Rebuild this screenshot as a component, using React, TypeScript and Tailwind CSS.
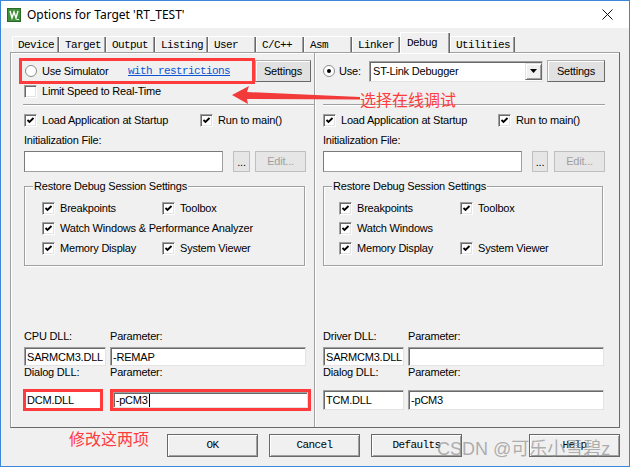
import React from "react";

const mono = "font-['Liberation_Mono','Courier_New',monospace] text-[11px] tracking-[-0.6px]";

const tabs = [
  { label: "Device", w: "w-[47px]" },
  { label: "Target", w: "w-[47px]" },
  { label: "Output", w: "w-[49px]" },
  { label: "Listing", w: "w-[53px]" },
  { label: "User", w: "w-[48px]" },
  { label: "C/C++", w: "w-[48px]" },
  { label: "Asm", w: "w-[48px]" },
  { label: "Linker", w: "w-[48px]" },
  { label: "Debug", w: "w-[50px]", active: true },
  { label: "Utilities", w: "w-[65px]" },
];

function Check({ checked = true }: { checked?: boolean }) {
  return (
    <span className="flex h-[13px] w-[13px] shrink-0 items-center justify-center border border-t-[#a0a0a0] border-l-[#a0a0a0] border-b-white border-r-white bg-white shadow-[inset_1px_1px_0_#696969,inset_-1px_-1px_0_#e3e3e3]">
      {checked && (
        <svg width="9" height="9" viewBox="0 0 9 9">
          <polyline points="1.5,4 3.5,6 7.5,2" fill="none" stroke="#000" strokeWidth="1.8" />
        </svg>
      )}
    </span>
  );
}

function CheckRow({ label, checked = true, className = "" }: { label: string; checked?: boolean; className?: string }) {
  return (
    <div className={`flex h-[14px] items-center gap-[5px] ${className}`}>
      <Check checked={checked} />
      <span className="whitespace-nowrap leading-[14px]">{label}</span>
    </div>
  );
}

function Radio({ on = false }: { on?: boolean }) {
  return (
    <svg width="12" height="12" viewBox="0 0 12 12" className="shrink-0">
      <circle cx="6" cy="6" r="5.5" fill="#fff" stroke="#8c8c8c" />
      {on && <circle cx="6" cy="6" r="2" fill="#000" />}
    </svg>
  );
}

function SunkenBox({ text, className = "", cursor = false }: { text: string; className?: string; cursor?: boolean }) {
  return (
    <div
      className={`flex items-center bg-white pl-[2px] border border-t-[#a0a0a0] border-l-[#a0a0a0] border-r-[#e3e3e3] border-b-[#e3e3e3] shadow-[inset_1px_1px_0_#696969] ${className}`}
    >
      <span className="whitespace-nowrap leading-[14px]">{text}</span>
      {cursor && <span className="ml-px h-[13px] w-px bg-black" />}
    </div>
  );
}

function SettingsBtn({ className = "" }: { className?: string }) {
  return (
    <div
      className={`flex h-[22px] items-center justify-center bg-[#e1e1e1] border border-[#adadad] border-r-[#696969] border-b-[#696969] shadow-[inset_1px_1px_0_#fff] ${className}`}
    >
      Settings
    </div>
  );
}

function InitRow({ left }: { left?: boolean }) {
  return (
    <>
      <div className="mt-[7px] h-[12px] leading-[12px]">Initialization File:</div>
      <div className="mt-[5px] flex h-[21px]">
        <div className="w-[199px] bg-white border border-[#a0a0a0] border-t-[#7a7a7a] border-l-[#7a7a7a]" />
        <div className={`ml-[10px] flex items-end justify-center pb-[4px] bg-[#e6e6e6] border border-[#bfbfbf] leading-[10px] ${left ? "w-[17px]" : "w-[16px]"}`}>
          ...
        </div>
        <div className={`flex items-center justify-center bg-[#e6e6e6] border border-[#bfbfbf] text-[#a0a0a0] ${left ? "ml-[5px] w-[51px]" : "ml-[6px] w-[51px]"}`}>
          Edit...
        </div>
      </div>
    </>
  );
}

function RestoreGroup({ full }: { full?: boolean }) {
  return (
    <div
      className={`relative mt-[14px] h-[80px] border border-[#a0a0a0] shadow-[inset_1px_1px_0_#fff,1px_1px_0_#fff] ${full ? "w-[281px] pl-[17px]" : "w-[280px] pl-[15px]"} pt-[14px]`}
    >
      <span className="absolute -top-[7px] left-[8px] bg-[#f0f0f0] px-px leading-[13px]">Restore Debug Session Settings</span>
      <div className="flex flex-col gap-[6px]">
        <div className="flex">
          <CheckRow label="Breakpoints" className={full ? "w-[120px]" : "w-[121px]"} />
          <CheckRow label="Toolbox" />
        </div>
        <CheckRow label={full ? "Watch Windows & Performance Analyzer" : "Watch Windows"} />
        <div className="flex">
          <CheckRow label="Memory Display" className={full ? "w-[120px]" : "w-[121px]"} />
          <CheckRow label="System Viewer" />
        </div>
      </div>
    </div>
  );
}

function DialogBtn({ label, className = "" }: { label: string; className?: string }) {
  return (
    <div
      className={`flex h-[23px] w-[91px] items-center justify-center bg-[#f0f0f0] border border-[#696969] shadow-[inset_1px_1px_0_#fff,inset_-1px_-1px_0_#a0a0a0] ${mono} ${className}`}
    >
      {label}
    </div>
  );
}

export default function App() {
  return (
    <div className="relative h-[467px] w-[630px] overflow-hidden border border-[#3c88d8] bg-[#f0f0f0] font-['Liberation_Sans',Arial,sans-serif] text-[11px] tracking-[-0.2px] text-black">
      {/* title bar */}
      <div className="flex h-[27px] items-center bg-white">
        <svg width="14" height="14" viewBox="0 0 14 14" className="ml-[6px]">
          <rect x="0.5" y="0.5" width="13" height="13" fill="#3f8f3a" stroke="#2a6a28" />
          <polyline points="3,3 5,10 7,4 9,10 11,3" fill="none" stroke="#fff" strokeWidth="1.4" />
          <path d="M9.5 11.5 h2.5" stroke="#dfe" strokeWidth="1" />
        </svg>
        <span className="ml-[6px] font-['Noto_Sans',sans-serif] text-[12px] tracking-normal">Options for Target 'RT_TEST'</span>
        <svg width="11" height="11" viewBox="0 0 11 11" className="ml-auto mr-[16px]">
          <path d="M0.5 0.5 L10.5 10.5 M10.5 0.5 L0.5 10.5" stroke="#111" strokeWidth="1" />
        </svg>
      </div>

      {/* tabs */}
      <div className={`ml-[11px] mt-[4px] flex h-[20px] items-end ${mono}`}>
        {tabs.map((t) =>
          t.active ? (
            <div
              key={t.label}
              className={`relative z-10 -mb-px h-[21px] ${t.w} border-l border-t border-white bg-[#f0f0f0] pl-[6px] pt-[3px] leading-[14px] shadow-[inset_-1px_0_0_#696969,inset_-2px_0_0_#a0a0a0]`}
            >
              {t.label}
            </div>
          ) : (
            <div
              key={t.label}
              className={`h-[16px] ${t.w} border-l border-t border-white bg-[#f0f0f0] pl-[5px] pt-[1px] leading-[14px] shadow-[inset_-1px_0_0_#696969,inset_-2px_0_0_#a0a0a0]`}
            >
              {t.label}
            </div>
          )
        )}
      </div>

      {/* panel */}
      <div className="ml-[9px] flex h-[376px] w-[610px] border border-[#a0a0a0] border-r-[#696969] border-b-[#696969] shadow-[inset_1px_1px_0_#fff]">
        {/* left column */}
        <div className="flex w-[303px] flex-col pl-[13px] pr-[3px]">
          <div className="-ml-[5px] mt-[5px] flex h-[26px] items-center">
            <div className="flex h-[26px] w-[236px] items-center border-[3px] border-[#ff3b3b] pl-[3px]">
              <Radio />
              <span className="ml-[5px] w-[86px] whitespace-nowrap">Use Simulator</span>
              <span className={`${mono} text-[#0a54d4] underline`}>with restrictions</span>
            </div>
            <SettingsBtn className="w-[56px]" />
          </div>
          <CheckRow label="Limit Speed to Real-Time" checked={false} />
          <div className="-ml-[1px] -mr-[3px] mt-[6px] h-[2px] border-t border-b border-t-[#a0a0a0] border-b-white" />
          <div className="mt-[7px] flex h-[14px] items-center">
            <CheckRow label="Load Application at Startup" className="w-[176px]" />
            <CheckRow label="Run to main()" />
          </div>
          <InitRow left />
          <RestoreGroup full />
          <div className="mt-[64px] flex h-[12px] leading-[12px]">
            <span className="w-[86px]">CPU DLL:</span>
            <span>Parameter:</span>
          </div>
          <div className="mt-[5px] flex h-[19px]">
            <SunkenBox text="SARMCM3.DLL" className="w-[82px]" />
            <SunkenBox text="-REMAP" className="ml-[4px] w-[196px]" />
          </div>
          <div className="flex h-[12px] leading-[12px]">
            <span className="w-[86px]">Dialog DLL:</span>
            <span>Parameter:</span>
          </div>
          <div className="mt-[11px] flex h-[22px]">
            <div className="-ml-[1px] flex w-[80px] items-center border-[3px] border-[#ff3b3b] bg-white pl-[1px]">DCM.DLL</div>
            <div className="ml-[7px] flex w-[202px] border-[3px] border-[#ff3b3b]">
              <SunkenBox text="-pCM3" cursor className="w-full pl-0" />
            </div>
          </div>
        </div>

        {/* divider */}
        <div className="w-[2px] border-l border-r border-l-[#a0a0a0] border-r-white" />

        {/* right column */}
        <div className="flex flex-1 flex-col pl-[7px] pr-[14px]">
          <div className="mt-[5px] flex h-[26px] items-center">
            <Radio on />
            <span className="ml-[4px] w-[30px]">Use:</span>
            <div className="flex h-[21px] w-[174px] items-center bg-white pl-[3px] border border-t-[#a0a0a0] border-l-[#a0a0a0] border-r-[#e3e3e3] border-b-[#e3e3e3] shadow-[inset_1px_1px_0_#696969]">
              <span className="flex-1">ST-Link Debugger</span>
              <div className="flex h-[17px] w-[17px] items-center justify-center border border-[#e3e3e3] border-r-[#696969] border-b-[#696969] bg-[#f0f0f0] shadow-[inset_1px_1px_0_#fff,inset_-1px_-1px_0_#a0a0a0]">
                <svg width="7" height="4" viewBox="0 0 7 4">
                  <path d="M0 0 H7 L3.5 4 Z" fill="#000" />
                </svg>
              </div>
            </div>
            <SettingsBtn className="ml-[4px] w-[58px]" />
          </div>
          <div className="h-[14px]" />
          <div className="mt-[6px] h-[2px] border-t border-b border-t-[#a0a0a0] border-b-white" />
          <div className="mt-[7px] flex h-[14px] items-center">
            <CheckRow label="Load Application at Startup" className="w-[175px]" />
            <CheckRow label="Run to main()" />
          </div>
          <InitRow />
          <RestoreGroup />
          <div className="mt-[64px] flex h-[12px] leading-[12px]">
            <span className="w-[85px]">Driver DLL:</span>
            <span>Parameter:</span>
          </div>
          <div className="mt-[5px] flex h-[19px]">
            <SunkenBox text="SARMCM3.DLL" className="w-[81px]" />
            <SunkenBox text="" className="ml-[4px] w-[196px]" />
          </div>
          <div className="flex h-[12px] leading-[12px]">
            <span className="w-[85px]">Dialog DLL:</span>
            <span>Parameter:</span>
          </div>
          <div className="mt-[12px] flex h-[20px]">
            <SunkenBox text="TCM.DLL" className="w-[81px]" />
            <SunkenBox text="-pCM3" className="ml-[4px] w-[196px]" />
          </div>
        </div>
      </div>

      {/* dialog buttons */}
      <div className="mt-[6px] flex pl-[166px]">
        <DialogBtn label="OK" />
        <DialogBtn label="Cancel" className="ml-[11px]" />
        <DialogBtn label="Defaults" className="ml-[11px]" />
        <DialogBtn label="Help" className="ml-[67px]" />
      </div>

      {/* annotations */}
      <svg width="132" height="22" viewBox="0 0 132 22" className="absolute left-[229px] top-[83px]">
        <polygon points="2,11 19,2 17,8 130,13 130,15.5 17,15 18,20" fill="#f23a3a" />
      </svg>
      <span className="absolute left-[359px] top-[89px] font-['Noto_Sans_CJK_SC',sans-serif] text-[16px] leading-[18px] tracking-normal text-[#ff3b3b]">
        选择在线调试
      </span>
      <span className="absolute left-[68px] top-[428px] font-['Noto_Sans_CJK_SC',sans-serif] text-[16px] leading-[18px] tracking-normal text-[#ff3b3b]">
        修改这两项
      </span>
      <span className="absolute left-[436px] top-[436px] font-['Liberation_Sans','Noto_Sans_CJK_SC',sans-serif] text-[18px] leading-[24px] tracking-normal text-[#8f8f8f]/70">
        CSDN @可乐小雪碧z
      </span>
    </div>
  );
}
